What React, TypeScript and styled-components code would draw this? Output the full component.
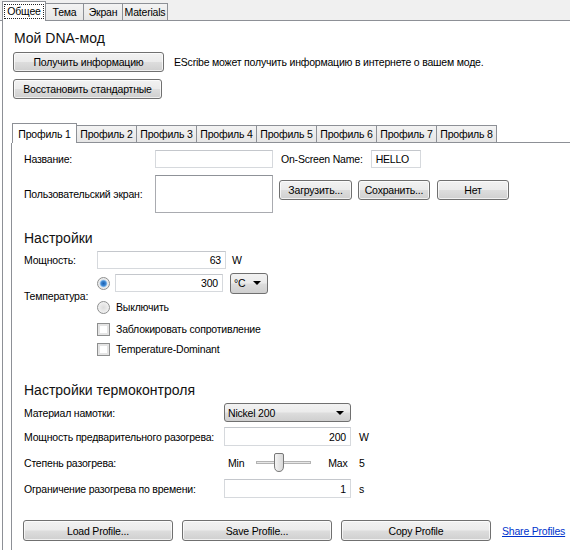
import React from "react"
import styled, { createGlobalStyle, css } from "styled-components"

const GlobalStyle = createGlobalStyle`
  html, body {
    margin: 0;
    padding: 0;
    background: #fff;
  }
  body {
    font-family: "Liberation Sans", Arial, sans-serif;
    font-size: 10.5px;
    letter-spacing: -0.2px;
    color: #000;
  }
`

const Window = styled.div`
  width: 570px;
  height: 550px;
  overflow: hidden;
  background: #fff;
  display: flex;
  flex-direction: column;
`

const TabStrip = styled.div<{ $bg: string; $left: number }>`
  display: flex;
  align-items: flex-end;
  height: 21px;
  box-sizing: border-box;
  padding-left: ${(p) => p.$left}px;
  border-bottom: 1px solid #8d9096;
  background: ${(p) => p.$bg};
  flex-shrink: 0;
`

const Tab = styled.div<{ $active?: boolean; $w: number }>`
  box-sizing: border-box;
  width: ${(p) => p.$w}px;
  height: 17px;
  margin-left: -1px;
  border: 1px solid #8d9096;
  border-bottom: none;
  background: linear-gradient(#f3f3f3, #e6e6e6);
  display: flex;
  align-items: center;
  justify-content: center;
  white-space: nowrap;
  ${(p) =>
    p.$active &&
    css`
      margin-bottom: -1px;
      height: 20px;
      background: #fff;
      position: relative;
      z-index: 1;
    `}
`

const FocusText = styled.span`
  outline: 1px dotted #222;
  outline-offset: 0;
  padding: 0 2px;
  line-height: 13px;
`

const Panel = styled.div`
  flex: 1;
  margin-left: 2px;
  border-left: 1px solid #8d9096;
  padding-left: 9px;
  display: flex;
  flex-direction: column;
  min-height: 0;
`

const Title = styled.div<{ $top: number; $left?: number }>`
  font-size: 14px;
  letter-spacing: 0;
  line-height: 18px;
  margin-top: ${(p) => p.$top}px;
  margin-left: ${(p) => p.$left ?? 0}px;
  color: #111;
`

const Row = styled.div<{ $top: number; $align?: string }>`
  display: flex;
  align-items: ${(p) => p.$align ?? "center"};
  margin-top: ${(p) => p.$top}px;
`

const Button = styled.button<{ $w: number; $h?: number }>`
  box-sizing: border-box;
  width: ${(p) => p.$w}px;
  height: ${(p) => p.$h ?? 20}px;
  flex-shrink: 0;
  padding: 0;
  border: 1px solid #707070;
  border-radius: 3px;
  background: linear-gradient(#f2f2f2 0%, #ebebeb 48%, #dddddd 52%, #cfcfcf 100%);
  font-family: inherit;
  font-size: inherit;
  letter-spacing: inherit;
  color: #000;
  box-shadow: inset 0 0 0 1px rgba(255, 255, 255, 0.7);
`

const Note = styled.span`
  margin-left: 10px;
`

const ProfilePanel = styled.div`
  flex: 1;
  margin-left: -1px;
  border-left: 1px solid #8d9096;
  padding-left: 12px;
  display: flex;
  flex-direction: column;
`

const Label = styled.span<{ $w?: number }>`
  width: ${(p) => (p.$w ? `${p.$w}px` : "auto")};
  flex-shrink: 0;
  white-space: nowrap;
`

const Field = styled.div<{ $w: number; $h?: number; $dark?: boolean; $right?: boolean; $ml?: number }>`
  box-sizing: border-box;
  width: ${(p) => p.$w}px;
  height: ${(p) => p.$h ?? 18}px;
  margin-left: ${(p) => p.$ml ?? 0}px;
  flex-shrink: 0;
  border: 1px solid ${(p) => (p.$dark ? "#a9abb0" : "#d6d9dd")};
  border-top-color: ${(p) => (p.$dark ? "#8f9298" : "#c4c7cc")};
  background: #fff;
  display: flex;
  align-items: center;
  justify-content: ${(p) => (p.$right ? "flex-end" : "flex-start")};
  padding: 0 4px;
`

const Unit = styled.span<{ $ml: number }>`
  margin-left: ${(p) => p.$ml}px;
`

const Select = styled.div<{ $w: number; $h?: number; $ml?: number }>`
  box-sizing: border-box;
  width: ${(p) => p.$w}px;
  height: ${(p) => p.$h ?? 20}px;
  margin-left: ${(p) => p.$ml ?? 0}px;
  flex-shrink: 0;
  border: 1px solid #707070;
  border-radius: 3px;
  background: linear-gradient(#f2f2f2 0%, #ebebeb 48%, #dddddd 52%, #cfcfcf 100%);
  display: flex;
  align-items: center;
  justify-content: space-between;
  padding: 0 6px 0 3px;
`

const Arrow = styled.span`
  width: 0;
  height: 0;
  border-left: 4px solid transparent;
  border-right: 4px solid transparent;
  border-top: 4px solid #000;
`

const TempGrid = styled.div`
  display: grid;
  grid-template-columns: 73px auto;
  grid-template-rows: 24px 24px 20px 20px;
  margin-top: 2px;
  align-items: center;
`

const TempLabel = styled.span`
  grid-row: 1 / span 2;
  grid-column: 1;
  padding-top: 2px;
`

const Option = styled.div`
  grid-column: 2;
  display: flex;
  align-items: center;
`

const Radio = styled.span<{ $checked?: boolean }>`
  box-sizing: border-box;
  width: 13px;
  height: 13px;
  border-radius: 50%;
  border: 1px solid #8e8f8f;
  background: ${(p) =>
    p.$checked
      ? "radial-gradient(circle, #1c5fb0 0, #3f8ad6 2.5px, #a9cdef 3.6px, #e9e9e9 4.2px, #f7f7f7 100%)"
      : "radial-gradient(circle, #dcdcdc 0, #e8e8e8 3px, #f8f8f8 100%)"};
  flex-shrink: 0;
`

const Check = styled.span`
  box-sizing: border-box;
  width: 13px;
  height: 13px;
  border: 1px solid #8e8f8f;
  background: #fff;
  box-shadow: inset 0 0 0 2px #e4e4e4;
  flex-shrink: 0;
`

const OptionText = styled.span`
  margin-left: 6px;
`

const ThermoGrid = styled.div`
  display: grid;
  grid-template-columns: 192px 127px auto;
  column-gap: 8px;
  margin-top: 1px;
  align-items: center;
`

const ThermoRow = styled.div<{ $top: number; $h: number }>`
  display: contents;
  & > * {
    margin-top: ${(p) => p.$top}px;
    height: ${(p) => p.$h}px;
  }
`

const Cell = styled.span`
  display: flex;
  align-items: center;
  white-space: nowrap;
`

const SliderBox = styled.div`
  box-sizing: border-box;
  display: flex;
  align-items: center;
  padding-left: 4px;
`

const MinMax = styled.span<{ $ml?: number }>`
  margin-left: ${(p) => p.$ml ?? 0}px;
`

const FooterRow = styled.div`
  display: flex;
  align-items: center;
  gap: 9px;
  margin-top: 22px;
  margin-left: -1px;
`

const ShareLink = styled.a`
  margin-left: 2px;
  color: #0033cc;
  text-decoration: underline;
  white-space: nowrap;
  cursor: pointer;
`

function Slider() {
  return (
    <svg width="56" height="22" viewBox="0 0 56 22" style={{ marginLeft: 12 }}>
      <defs>
        <linearGradient id="thumb" x1="0" y1="0" x2="1" y2="0">
          <stop offset="0" stopColor="#f6f6f6" />
          <stop offset="1" stopColor="#d6d6d6" />
        </linearGradient>
      </defs>
      <rect x="0.5" y="9.5" width="54" height="2" fill="#e7e7e7" stroke="#b4b4b4" strokeWidth="1" />
      <path
        d="M18.5,3 Q18.5,1.5 20,1.5 H26 Q27.5,1.5 27.5,3 V14 Q27.5,19.5 23,19.5 Q18.5,19.5 18.5,14 Z"
        fill="url(#thumb)"
        stroke="#787878"
        strokeWidth="1"
      />
    </svg>
  )
}

const profiles = ["Профиль 1", "Профиль 2", "Профиль 3", "Профиль 4", "Профиль 5", "Профиль 6", "Профиль 7", "Профиль 8"]

export default function App() {
  return (
    <>
      <GlobalStyle />
      <Window>
        <TabStrip $bg="#f0f0f0" $left={3}>
          <Tab $active $w={44}>
            <FocusText>Общее</FocusText>
          </Tab>
          <Tab $w={39}>Тема</Tab>
          <Tab $w={40}>Экран</Tab>
          <Tab $w={46}>Materials</Tab>
        </TabStrip>
        <Panel>
          <Title $top={8} $left={2}>Мой DNA-мод</Title>
          <Row $top={5}>
            <Button $w={151} style={{ marginLeft: 1 }}>Получить информацию</Button>
            <Note>EScribe может получить информацию в интернете о вашем моде.</Note>
          </Row>
          <Row $top={7}>
            <Button $w={149} style={{ marginLeft: 1 }}>Восстановить стандартные</Button>
          </Row>
          <div style={{ marginTop: 23 }}>
            <TabStrip $bg="#fff" $left={1}>
              {profiles.map((p, i) => (
                <Tab key={p} $active={i === 0} $w={i === 0 ? 65 : 61}>
                  {p}
                </Tab>
              ))}
            </TabStrip>
          </div>
          <ProfilePanel>
            <Row $top={7}>
              <Label $w={131}>Название:</Label>
              <Field $w={118} />
              <Label style={{ marginLeft: 8 }}>On-Screen Name:</Label>
              <Field $w={50} $ml={8}>HELLO</Field>
            </Row>
            <Row $top={7} $align="flex-start">
              <Label $w={131} style={{ lineHeight: "38px" }}>Пользовательский экран:</Label>
              <Field $w={118} $h={38} $dark />
              <Button $w={73} style={{ marginLeft: 6, marginTop: 5 }}>Загрузить...</Button>
              <Button $w={72} style={{ marginLeft: 6, marginTop: 5 }}>Сохранить...</Button>
              <Button $w={72} style={{ marginLeft: 7, marginTop: 5 }}>Нет</Button>
            </Row>

            <Title $top={16}>Настройки</Title>
            <Row $top={4}>
              <Label $w={73}>Мощность:</Label>
              <Field $w={129} $right>63</Field>
              <Unit $ml={6}>W</Unit>
            </Row>
            <TempGrid>
              <TempLabel>Температура:</TempLabel>
              <Option>
                <Radio $checked />
                <Field $w={108} $right $ml={5}>300</Field>
                <Select $w={38} $ml={7} $h={21}>
                  <span>°C</span>
                  <Arrow />
                </Select>
              </Option>
              <Option>
                <Radio />
                <OptionText>Выключить</OptionText>
              </Option>
              <Option>
                <Check />
                <OptionText>Заблокировать сопротивление</OptionText>
              </Option>
              <Option>
                <Check />
                <OptionText>Temperature-Dominant</OptionText>
              </Option>
            </TempGrid>

            <Title $top={22}>Настройки термоконтроля</Title>
            <ThermoGrid>
              <ThermoRow $top={3} $h={19}>
                <Cell>Материал намотки:</Cell>
                <Select $w={127} $h={19}>
                  <span>Nickel 200</span>
                  <Arrow />
                </Select>
                <Cell />
              </ThermoRow>
              <ThermoRow $top={5} $h={19}>
                <Cell>Мощность предварительного разогрева:</Cell>
                <Field $w={127} $h={19} $right>200</Field>
                <Cell>W</Cell>
              </ThermoRow>
              <ThermoRow $top={6} $h={22}>
                <Cell>Степень разогрева:</Cell>
                <SliderBox>
                  <MinMax>Min</MinMax>
                  <Slider />
                  <MinMax $ml={16}>Max</MinMax>
                </SliderBox>
                <Cell>5</Cell>
              </ThermoRow>
              <ThermoRow $top={5} $h={19}>
                <Cell>Ограничение разогрева по времени:</Cell>
                <Field $w={127} $h={19} $right>1</Field>
                <Cell>s</Cell>
              </ThermoRow>
            </ThermoGrid>

            <FooterRow>
              <Button $w={150} $h={21}>Load Profile...</Button>
              <Button $w={150} $h={21}>Save Profile...</Button>
              <Button $w={150} $h={21}>Copy Profile</Button>
              <ShareLink>Share Profiles</ShareLink>
            </FooterRow>
          </ProfilePanel>
        </Panel>
      </Window>
    </>
  )
}
